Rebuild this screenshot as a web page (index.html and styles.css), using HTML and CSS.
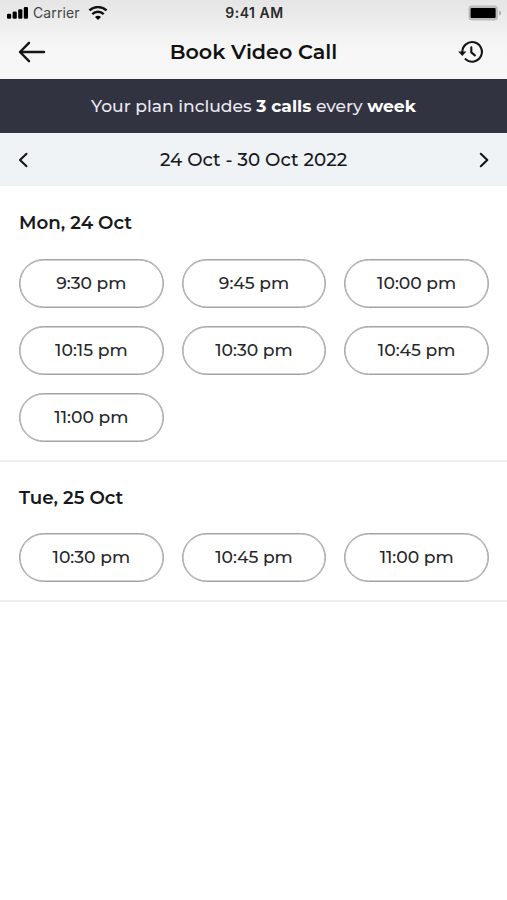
FILE: index.html
```html
<!DOCTYPE html>
<html lang="en">
<head>
<meta charset="utf-8">
<title>Book Video Call</title>
<link rel="stylesheet" href="styles.css">
</head>
<body>
<header class="top">
  <div class="status">
    <div class="network">
      <svg class="signal" width="22" height="14" viewBox="0 0 22 14"><rect x="0" y="7.8" width="4.2" height="5" rx="1.2"/><rect x="5.6" y="5.6" width="4.2" height="7.2" rx="1.2"/><rect x="11.2" y="3.3" width="4.2" height="9.5" rx="1.2"/><rect x="16.8" y="1" width="4.2" height="11.8" rx="1.2"/></svg>
      <span class="carrier">Carrier</span>
      <svg class="wifi" width="20" height="14" viewBox="0 0 20 14"><path d="M1.4 4.4a12.8 12.8 0 0 1 17.2 0M4.3 8.1a8.4 8.4 0 0 1 11.4 0" fill="none" stroke="#111" stroke-width="2.5"/><path d="M7 11a4.6 4.6 0 0 1 6 0L10 14z"/></svg>
    </div>
    <span class="clock">9:41 AM</span>
    <svg class="battery" width="34" height="16" viewBox="0 0 34 16"><rect x=".5" y=".5" width="29.5" height="15" rx="3.5" fill="#bcbcbc"/><path d="M31.2 5.6q2 .7 2 2.4t-2 2.4z" fill="#aaa"/><rect x="2.6" y="3" width="25" height="10" rx="1" fill="#000"/></svg>
  </div>
  <div class="bar">
    <svg class="back" width="28" height="22" viewBox="0 0 28 22"><path d="M26 11H2M11 1.8L2 11l9 9.2"/></svg>
    <h1 class="title">Book Video Call</h1>
    <svg class="history" width="26" height="24" viewBox="0 0 26 24"><path d="M4.3 12.2A9.8 9.8 0 1 1 7.6 19.2"/><path d="M13.3 7.4v5l3.6 3"/><path class="tip" d="M.2 11.5h8.2L4.3 16z"/></svg>
  </div>
</header>
<div class="plan"><p class="plan-text">Your plan includes <b>3 calls</b> every <b>week</b></p></div>
<nav class="week">
  <svg class="chevron" width="10" height="16" viewBox="0 0 10 16"><path d="M8.5 1.8L2 8l6.5 6.2"/></svg>
  <span class="range">24 Oct - 30 Oct 2022</span>
  <svg class="chevron" width="10" height="16" viewBox="0 0 10 16"><path d="M1.8 1.8L8.3 8l-6.5 6.2"/></svg>
</nav>
<main>
  <section class="day">
    <h2 class="date">Mon, 24 Oct</h2>
    <div class="slots">
      <button class="slot">9:30 pm</button>
      <button class="slot">9:45 pm</button>
      <button class="slot">10:00 pm</button>
      <button class="slot">10:15 pm</button>
      <button class="slot">10:30 pm</button>
      <button class="slot">10:45 pm</button>
      <button class="slot">11:00 pm</button>
    </div>
  </section>
  <section class="day">
    <h2 class="date">Tue, 25 Oct</h2>
    <div class="slots">
      <button class="slot">10:30 pm</button>
      <button class="slot">10:45 pm</button>
      <button class="slot">11:00 pm</button>
    </div>
  </section>
</main>
</body>
</html>
```
FILE: styles.css
```css
* { box-sizing: border-box; }
body {
  margin: 0;
  min-height: 900px;
  background: #fff;
  color: #17181b;
  font-family: Montserrat, Inter, sans-serif;
}
h1, h2, p { margin: 0; }
.top {
  height: 79px;
  background: linear-gradient(#e5e5e5, #f6f6f6 60%, #f7f7f7);
}
.status {
  height: 26px;
  padding: 0 5px 0 7px;
  display: grid;
  grid-template-columns: 1fr auto 1fr;
  align-items: center;
  font-family: Inter, sans-serif;
}
.network { display: flex; align-items: center; }
.carrier { margin: 0 8px 0 4px; font-size: 14px; line-height: 16px; padding-bottom: 1px; letter-spacing: .1px; color: #444; }
.clock { font-size: 14px; line-height: 16px; font-weight: 600; letter-spacing: .5px; color: #2a2a2a; }
.battery { justify-self: end; }
.bar {
  height: 52px;
  padding: 0 23px 0 18px;
  display: grid;
  grid-template-columns: 1fr auto 1fr;
  align-items: center;
}
.title { margin: 0 -2.5px 0 2.5px; font-size: 20.7px; font-weight: 600; line-height: 26px; color: #111; }
.back, .history, .chevron {
  fill: none;
  stroke: #151515;
  stroke-width: 2.1;
  stroke-linecap: round;
  stroke-linejoin: round;
}
.back { stroke-width: 2.4; }
.history { justify-self: end; }
.history .tip { fill: #151515; stroke: none; }
.plan {
  height: 54px;
  padding-bottom: 1px;
  display: flex;
  align-items: center;
  justify-content: center;
  background: #323340;
  color: #e9e9f2;
}
.plan-text { font-size: 17.15px; line-height: 21px; font-weight: 500; white-space: nowrap; }
.plan-text b { font-weight: 700; color: #fff; }
.week {
  height: 53px;
  padding: 0 18px;
  display: flex;
  align-items: center;
  justify-content: space-between;
  background: #eff3f6;
}
.range { font-size: 18.3px; font-weight: 500; }
.day { padding: 25px 18px 18px 19px; border-bottom: 2px solid #f0f0f0; }
.day + .day { padding-top: 24px; }
.day + .day .slots { margin-top: 23px; }
.date { font-size: 18.3px; line-height: 24px; font-weight: 600; }
.slots {
  margin-top: 24px;
  display: grid;
  grid-template-columns: repeat(3, 1fr);
  gap: 18.2px 18px;
}
.slot {
  height: 48.8px;
  padding: 0;
  border: 1px solid #a0a3a6;
  border-radius: 25px;
  box-shadow: inset 0 0 0 .5px #a9acaf, inset 0 0 1px #a0a3a6;
  background: #fff;
  color: #26272a;
  font: 500 17.2px/24px Montserrat, Inter, sans-serif;
}
```
